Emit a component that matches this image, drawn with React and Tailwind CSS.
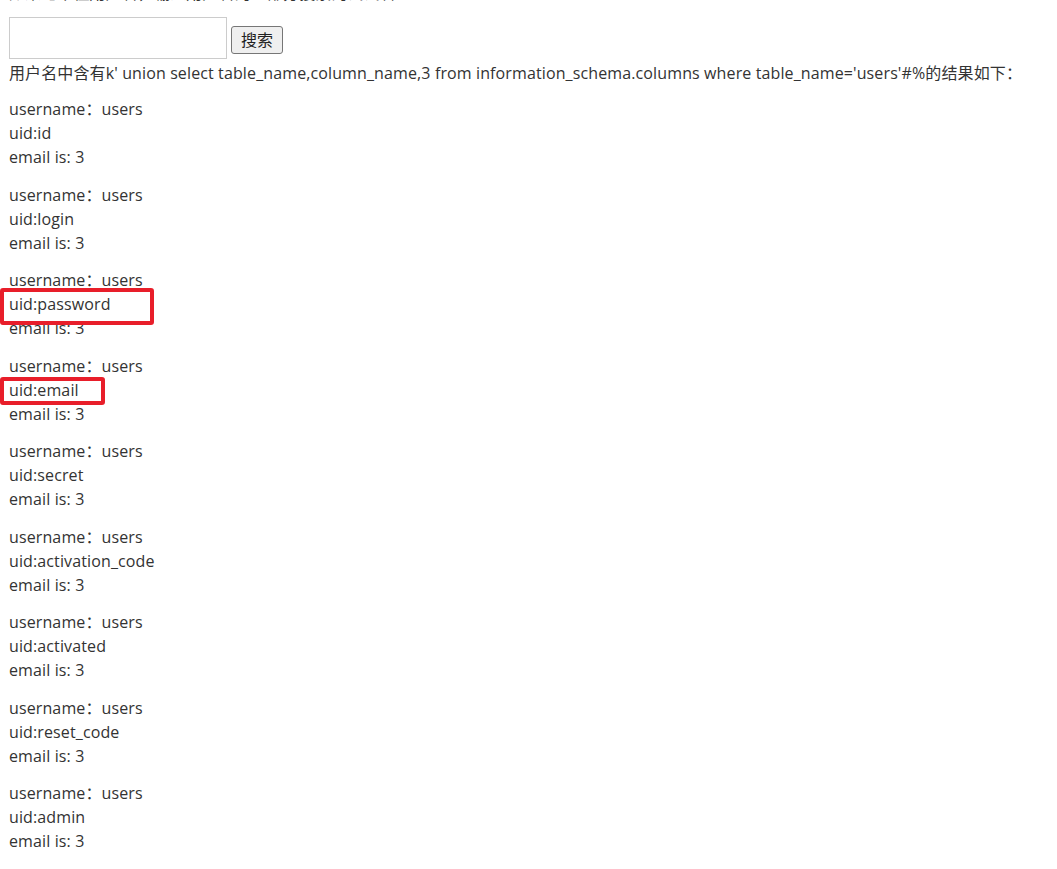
import React from 'react'

const columns = [
  'id',
  'login',
  'password',
  'email',
  'secret',
  'activation_code',
  'activated',
  'reset_code',
  'admin',
]

function App() {
  return (
    <div
      className="relative flow-root min-h-[869px] bg-white pl-[9px] text-[16px] leading-[24px] tracking-[0.12px] text-[#333]"
      style={{ fontFamily: '"Open Sans", "Noto Sans CJK SC", sans-serif' }}
    >
      {/* line scrolled off the top */}
      <p className="-mt-[19px]">如果记不住用户名，输入用户名的一部分搜索的试试看？</p>

      <div className="mt-[12px] flex items-end gap-[4px]">
        <input type="text" className="h-[42px] w-[218px] border border-[#ccc] bg-white outline-none" />
        <button className="mb-[5px] h-[28px] rounded-[3px] border border-[#767676] bg-[#efefef] px-[9px] text-[16px] leading-[24px] text-[#222]">
          搜索
        </button>
      </div>

      <p className="mt-[2px]">
        用户名中含有k' union select table_name,column_name,3 from information_schema.columns where table_name='users'#%的结果如下：
      </p>

      <div className="mt-[12px]">
        {columns.map((c) => (
          <div key={c} className="mb-[13.5px]">
            <div>username：users</div>
            <div>uid:{c}</div>
            <div>email is: 3</div>
          </div>
        ))}
      </div>

      {/* highlight boxes */}
      <div className="absolute left-0 top-[288px] h-[37px] w-[154px] rounded-[3px] border-[4px] border-[#e81e2a]" />
      <div className="absolute left-0 top-[377px] h-[28px] w-[105px] rounded-[3px] border-[4px] border-[#e81e2a]" />
    </div>
  )
}

export default App
